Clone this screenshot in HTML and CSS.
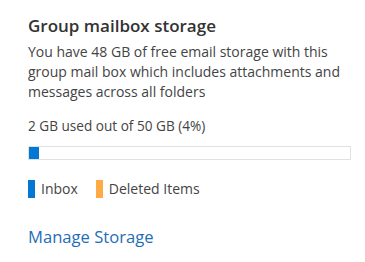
FILE: index.html
```html
<!DOCTYPE html>
<html>
<head>
<meta charset="utf-8">
<link rel="stylesheet" href="styles.css">
</head>
<body>
<div class="panel">
  <h1 class="title">Group mailbox storage</h1>
  <p class="desc">You have 48 GB of free email storage with this group mail box which includes attachments and messages across all folders</p>
  <p class="usage">2 GB used out of 50 GB (4%)</p>
  <div class="bar"><div class="fill" style="width: 3%"></div></div>
  <div class="legend">
    <span class="item"><span class="swatch inbox"></span>Inbox</span>
    <span class="item"><span class="swatch deleted"></span>Deleted Items</span>
  </div>
  <a class="manage" href="#">Manage Storage</a>
</div>
</body>
</html>
```
FILE: styles.css
```css
html, body {
  margin: 0;
  padding: 0;
  background: #ffffff;
}
body {
  font-family: "Open Sans", "Noto Sans", sans-serif;
  color: #444444;
}
.panel {
  padding: 14px 14px 0 28px;
  display: flex;
  flex-direction: column;
  align-items: flex-start;
}
.title {
  margin: 0;
  font-size: 17px;
  font-weight: 600;
  color: #333333;
  line-height: 24px;
}
.desc {
  margin: 4px 0 0 0;
  font-size: 14px;
  line-height: 20px;
  width: 335px;
}
.usage {
  margin: 14px 0 0 0;
  font-size: 13.6px;
  line-height: 20px;
}
.bar {
  margin-top: 10px;
  width: 321px;
  height: 12px;
  border: 1px solid #e1e1e1;
  box-sizing: content-box;
  display: flex;
}
.fill {
  background: #0078d4;
  height: 100%;
}
.legend {
  margin-top: 20px;
  display: flex;
  gap: 18px;
  font-size: 14px;
  line-height: 18px;
}
.item {
  display: flex;
  align-items: center;
  gap: 6px;
}
.swatch {
  width: 7px;
  height: 18px;
  display: inline-block;
}
.inbox { background: #0078d4; }
.deleted { background: #ffaa44; }
.manage {
  margin-top: 28px;
  font-size: 16.6px;
  color: #1e6eb8;
  text-decoration: none;
  line-height: 22px;
}
```
